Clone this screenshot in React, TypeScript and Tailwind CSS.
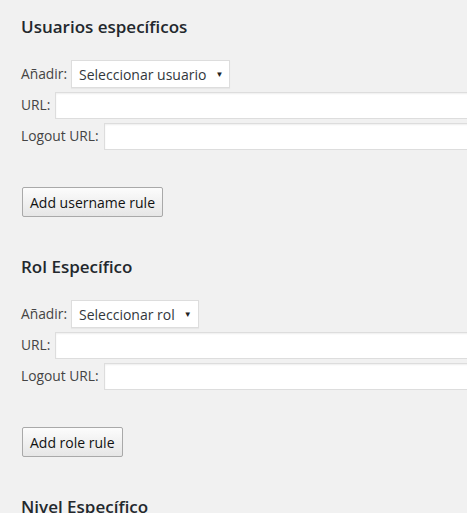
import React from 'react';

type Section = {
  title: string;
  selectLabel?: string;
  buttonLabel?: string;
};

const sections: Section[] = [
  { title: 'Usuarios específicos', selectLabel: 'Seleccionar usuario', buttonLabel: 'Add username rule' },
  { title: 'Rol Específico', selectLabel: 'Seleccionar rol', buttonLabel: 'Add role rule' },
  { title: 'Nivel Específico' },
];

const inputCls =
  'h-[27px] w-[440px] shrink-0 border border-[#dddddd] bg-white shadow-[inset_0_1px_2px_rgba(0,0,0,0.07)] outline-none';

const labelCls = 'shrink-0 whitespace-nowrap text-[13.8px] text-[#444]';

const RuleSection: React.FC<{ section: Section }> = ({ section }) => (
  <div className="mb-[37px]">
    <h2 className="h-[26px] whitespace-nowrap text-[17px] font-semibold leading-[26px] text-[#23282d]">
      {section.title}
    </h2>

    {section.selectLabel && (
      <>
        <div className="mt-[20px] flex h-[28px] items-center gap-[4px]">
          <span className={labelCls}>Añadir:</span>
          <div className="flex h-[28px] shrink-0 items-center whitespace-nowrap border border-[#dddddd] bg-white pl-[7px] pr-[6px] text-[14px] text-[#32373c] shadow-[0_1px_1px_rgba(0,0,0,0.04)]">
            <span>{section.selectLabel}</span>
            <span className="ml-[9px] text-[8px] text-[#222]">▼</span>
          </div>
        </div>

        <div className="mt-[4px] flex h-[27px] items-center gap-[5px]">
          <span className={labelCls}>URL:</span>
          <input type="text" className={inputCls} />
        </div>

        <div className="mt-[4px] flex h-[27px] items-center gap-[5px]">
          <span className={labelCls}>Logout URL:</span>
          <input type="text" className={inputCls} />
        </div>

        <button className="mt-[37px] ml-[1px] h-[30px] whitespace-nowrap rounded-[2px] border border-[#a9a9a9] bg-gradient-to-b from-[#fcfcfc] to-[#e6e6e6] px-[7px] text-[14px] text-[#111]">
          {section.buttonLabel}
        </button>
      </>
    )}
  </div>
);

export default function App() {
  return (
    <div
      className="h-screen overflow-hidden bg-[#f1f1f1] pl-[21px] pt-[14px]"
      style={{ fontFamily: '"Open Sans", "Noto Sans", sans-serif' }}
    >
      {sections.map((s) => (
        <RuleSection key={s.title} section={s} />
      ))}
    </div>
  );
}
